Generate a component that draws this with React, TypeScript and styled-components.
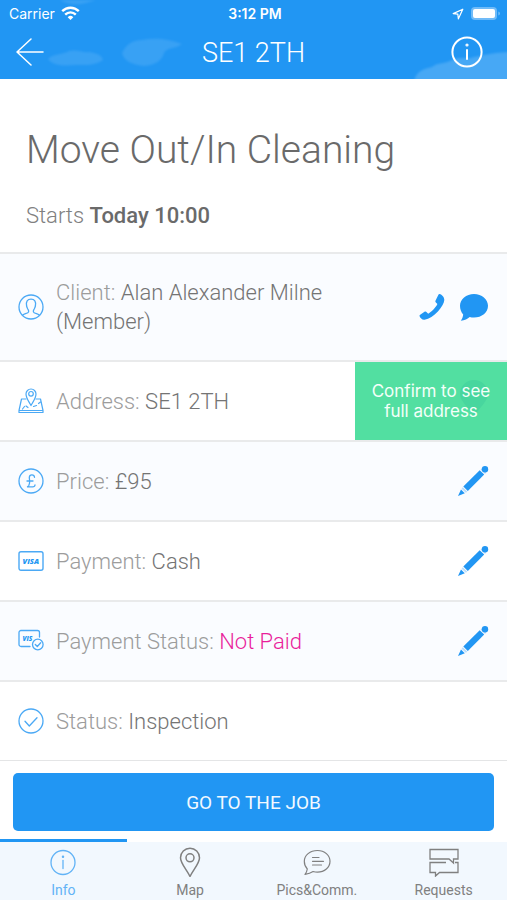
import React from 'react';
import styled, { createGlobalStyle, css } from 'styled-components';

const BLUE = '#2196f3';

const GlobalStyle = createGlobalStyle`
  * { box-sizing: border-box; }
  body {
    margin: 0;
    background: #ffffff;
    color: #616161;
    font-family: Roboto, "Liberation Sans", sans-serif;
    font-weight: 300;
  }
  button { font: inherit; border: 0; padding: 0; cursor: pointer; }
  svg { display: block; flex: none; }
`;

const Screen = styled.div`
  display: flex;
  flex-direction: column;
  min-height: 100vh;
`;

const Header = styled.header`
  position: sticky;
  top: 0;
  z-index: 2;
  overflow: hidden;
  background: ${BLUE};
  color: #ffffff;
`;

const Clouds = styled.svg`
  position: absolute;
  inset: 0;
  width: 100%;
  height: 100%;

  path { filter: blur(1px); }
`;

const StatusBar = styled.div`
  position: relative;
  display: grid;
  grid-template-columns: 1fr auto 1fr;
  align-items: center;
  height: 27px;
  padding: 0 6px 0 9px;
  font-family: Inter, sans-serif;
  font-size: 14px;
  font-weight: 400;
`;

const StatusGroup = styled.div<{ $end?: boolean }>`
  display: flex;
  align-items: center;
  gap: 6px;
  justify-content: ${(p) => (p.$end ? 'flex-end' : 'flex-start')};
`;

const Clock = styled.time`
  font-weight: 600;
`;

const NavBar = styled.div`
  position: relative;
  display: grid;
  grid-template-columns: 40px 1fr 32px;
  align-items: center;
  height: 52px;
  padding: 0 24px 2px 16px;
`;

const NavTitle = styled.h1`
  margin: 0;
  padding-top: 2px;
  text-align: center;
  font-size: 27px;
  line-height: 32px;
  font-weight: 300;
`;

const IconButton = styled.button`
  display: flex;
  align-items: center;
  background: none;
  color: inherit;
`;

const Intro = styled.section`
  padding: 47px 26px 23px;
`;

const JobTitle = styled.h2`
  margin: 0 0 28px;
  font-size: 39px;
  line-height: 48px;
  font-weight: 300;
  color: #6a6a6a;
`;

const Starts = styled.p`
  margin: 0;
  font-size: 22px;
  line-height: 27px;
  color: #808080;

  strong { font-weight: 500; color: #6a6a6a; }
`;

const Rows = styled.ul`
  margin: 0;
  padding: 0;
  list-style: none;
  border-bottom: 1px solid #e4e5e6;
`;

const Row = styled.li`
  display: flex;
  align-items: center;
  min-height: 80px;
  padding-left: 18px;
  border-top: 2px solid #e9eaeb;
  color: ${BLUE};

  &:nth-child(odd) { background: #fafcff; }

  > svg { color: #4ba9f5; }
`;

const RowText = styled.p`
  flex: 1;
  margin: 0;
  padding: 24px 12px;
  font-size: 22px;
  line-height: 29px;
`;

const Label = styled.span`
  color: #9c9c9c;
`;

const Value = styled.span<{ $alert?: boolean }>`
  color: ${(p) => (p.$alert ? '#e91e9b' : '#747474')};
`;

const Actions = styled.div`
  display: flex;
  gap: 13px;
  padding-right: 18px;
`;

const ConfirmButton = styled.button`
  position: relative;
  flex: 0 0 30%;
  align-self: stretch;
  min-width: 152px;
  background: #52dfa1;
  color: #f4fff9;
  font-family: Inter, sans-serif;
  font-size: 17px;
  line-height: 20px;
  font-weight: 400;
`;

const ConfirmText = styled.span`
  position: relative;
`;

const CoveredPin = styled.svg`
  position: absolute;
  right: 19px;
  top: 18px;
`;

const Footer = styled.footer`
  position: sticky;
  bottom: 0;
  margin-top: auto;
  background: #ffffff;
`;

const PrimaryButton = styled.button`
  display: block;
  width: calc(100% - 26px);
  height: 58px;
  margin: 12px 13px 8px;
  border-radius: 5px;
  background: ${BLUE};
  color: #f2f9ff;
  font-size: 19px;
  font-weight: 400;
`;

const Tabs = styled.nav`
  display: grid;
  grid-template-columns: repeat(4, 1fr);
`;

const Tab = styled.button<{ $active?: boolean }>`
  display: flex;
  flex-direction: column;
  align-items: center;
  gap: 3px;
  height: 61px;
  padding-top: 5px;
  border-top: 3px solid transparent;
  background: #f2f8fe;
  background-clip: padding-box;
  color: #808080;
  font-size: 14px;
  line-height: 20px;
  font-weight: 400;

  ${(p) =>
    p.$active &&
    css`
      border-top-color: ${BLUE};
      color: #62b3f6;
    `}
`;

const line = { fill: 'none', stroke: 'currentColor', strokeLinecap: 'round', strokeLinejoin: 'round' } as const;

const WifiIcon = () => (
  <svg width="19" height="15" viewBox="0 0 19 15" fill="none" stroke="#fff" strokeWidth="2.4">
    <path d="M1.2 5.2C6 .6 13 .6 17.8 5.2M4.2 8.6c3-3 7.6-3 10.6 0" />
    <path d="M9.5 14 6.7 11.2a4 4 0 0 1 5.6 0z" fill="#fff" stroke="none" />
  </svg>
);

const LocationIcon = () => (
  <svg width="12" height="12" viewBox="0 0 12 12" {...line} strokeWidth="1.2">
    <path d="M10.8 1.2 1.2 5.6l4.6.6.6 4.6z" />
  </svg>
);

const BatteryIcon = () => (
  <svg width="31" height="15" viewBox="0 0 31 15">
    <rect x="1" y="1" width="26" height="13" rx="4" fill="#70bbf8" />
    <rect x="3" y="3" width="22" height="9" rx="2" fill="#fff" />
    <path d="M28.5 5.5c1.7.6 1.7 3.4 0 4z" fill="#8ccaf9" />
  </svg>
);

const BackIcon = () => (
  <svg width="28" height="28" viewBox="0 0 28 28" {...line} strokeWidth="1.5">
    <path d="M27 14H1M15 1 1 14l14 13" />
  </svg>
);

const InfoIcon = () => (
  <svg width="32" height="32" viewBox="0 0 32 32" {...line} strokeWidth="2">
    <circle cx="16" cy="16" r="14.6" />
    <path d="M16 14v9" />
    <circle cx="16" cy="9" r=".6" fill="currentColor" />
  </svg>
);

const InfoTabIcon = () => (
  <svg width="30" height="30" viewBox="0 0 30 30" {...line} strokeWidth="1.3">
    <circle cx="15" cy="15.5" r="12" />
    <path d="M15 13.500v8" />
    <circle cx="15" cy="9.700" r=".6" fill="currentColor" />
  </svg>
);

const ClientIcon = () => (
  <svg width="26" height="26" viewBox="0 0 26 26" {...line} strokeWidth="1.3">
    <circle cx="13" cy="13" r="12" />
    <path d="M4.5 21.3c1-1.500 5.700-1.800 6.100-3.500.3-1.200-.2-1.800-.8-2.800-.5-.9-.9-1.700-1.200-3C7.700 7.400 9.500 5.200 13 5.200s5.300 2.200 4.400 6.800c-.3 1.300-.7 2.100-1.200 3-.6 1-1.100 1.600-.8 2.800.4 1.700 5.100 2 6.100 3.500" />
  </svg>
);

const AddressIcon = () => (
  <svg width="26" height="26" viewBox="0 0 26 26" {...line} strokeWidth="1.2">
    <path d="M8 11H3.500L1 22.500v2h24v-2L22.500 11H18M1 22.500h24" />
    <path d="M13 17.500C10.500 13 8 10 8 6a5 5 0 0 1 10 0c0 4-2.500 7-5 11.500z" />
    <circle cx="13" cy="5.800" r="2.300" />
    <path d="M4.500 21l2-2.500M8 18l2 1.500M15.500 18.500l3-1M20.500 15.500l2-1.500" />
  </svg>
);

const PriceIcon = () => (
  <svg width="26" height="26" viewBox="0 0 26 26" {...line} strokeWidth="1.3">
    <circle cx="13" cy="13" r="12" />
    <path d="M16.500 9.300c-.2-3-5-3.300-5.200.2 0 2.200 1.300 5-.6 8.300-.4.600-.9.800-1.200 1h5.200c1.300 0 2.200-.4 2.300-1.800M9 13h6" />
  </svg>
);

const VisaIcon = () => (
  <svg width="26" height="26" viewBox="0 0 26 26" {...line} strokeWidth="1.4">
    <rect x="1" y="3.700" width="24" height="18.600" rx="2" />
    <text x="12.800" y="15.800" textAnchor="middle" fontFamily="Open Sans, sans-serif" fontSize="7.500" fontWeight="800" fontStyle="italic" fill={BLUE} stroke="none">VISA</text>
  </svg>
);

const VisaCheckIcon = () => (
  <svg width="26" height="26" viewBox="0 0 26 26" {...line} strokeWidth="1.300">
    <path d="M12 18.500H3a2 2 0 0 1-2-2v-12a2 2 0 0 1 2-2h16.500a2 2 0 0 1 2 2V9" />
    <text x="4.500" y="12.500" fontFamily="Open Sans, sans-serif" fontSize="6.500" fontWeight="800" fontStyle="italic" fill={BLUE} stroke="none">VIS</text>
    <circle cx="19.800" cy="16.500" r="5.300" />
    <path d="m17.300 16.500 2 2 3.400-3.700" />
  </svg>
);

const StatusIcon = () => (
  <svg width="26" height="26" viewBox="0 0 26 26" {...line} strokeWidth="1.3">
    <circle cx="13" cy="13" r="12" />
    <path d="m7 13.300 4.300 4.700L19 9.700" />
  </svg>
);

const PhoneIcon = () => (
  <svg width="28" height="28" viewBox="0 0 28 28" fill="currentColor">
    <path d="M21.500 1c2.600.8 4.900 3 4.800 6-.2 3-2.500 7.200-6.400 11.400-4.200 4.400-8.600 7.500-13.400 8.300-2.300.3-4.300-1.800-4.900-3.500-.2-.7.1-1 .6-1.400l4.300-3c.8-.5 1.600-.3 2.200.4l1.500 1.500c2.800-1.300 7.600-6 9.200-9.600L17.900 9.500c-.6-.6-.7-1.200-.3-2L20.400 1.700c.3-.6.600-.8 1.100-.7z" />
  </svg>
);

const BubbleIcon = () => (
  <svg width="30" height="28" viewBox="0 0 30 28" fill="currentColor">
    <path d="M15 1c7.800 0 14 5.200 14 11.800s-6.200 11.800-14 11.800c-1.500 0-3-.2-4.300-.6-2 1.800-5 3.300-8.900 3.800 1.400-1.800 2.200-4.200 2.400-6.200C2.200 19.300 1 16.300 1 12.800 1 6.200 7.200 1 15 1z" />
  </svg>
);

const PencilIcon = () => (
  <svg width="32" height="32" viewBox="0 0 32 32" fill="currentColor">
    <path d="M1 31 4 24.600l3.800 3.700z" />
    <path d="m4.600 23.800 1.200-1.600 4.500 4.500-1.500 1.100z" opacity=".3" />
    <path d="M6.300 21.600 22.700 5.200l4.500 4.400-16.400 16.400z" />
    <path d="M23.500 4.400 25 3.200l4.200 4.200-1.200 1.500z" opacity=".3" />
    <circle cx="28" cy="4.300" r="3.200" />
  </svg>
);

const MapIcon = () => (
  <svg width="30" height="30" viewBox="0 0 30 30" {...line} strokeWidth="1.5">
    <path d="M15 29.500C12 23 5.500 16.500 5.500 10.700a9.500 9.500 0 0 1 19 0C24.500 16.500 18 23 15 29.500z" />
    <circle cx="15" cy="10.800" r="4" />
  </svg>
);

const CommentsIcon = () => (
  <svg width="30" height="30" viewBox="0 0 30 30" {...line} strokeWidth="1.2">
    <path d="M15.500 3.500C22.500 3.500 28 8.200 28 14.300s-5.500 10.900-12.500 10.900c-1.700 0-3-.2-4.400-.7-2 1.300-4.900 2.300-8.100 2.800 1.300-1.500 2-3.300 2.300-5.300C3.200 19.800 2.300 17.200 2.300 14.300 2.300 8.200 8 3.500 15.500 3.500z" />
    <path d="M10.500 10.500h6.500M10.500 14.300h11M10.500 18h9" />
  </svg>
);

const RequestsIcon = () => (
  <svg width="30" height="30" viewBox="0 0 30 30" fill="none" stroke="currentColor" strokeWidth="1.3">
    <path d="M1 2.500h28v9.500h-4.500v4l-4.500-4H1z" />
    <path d="M17 15.500H1v10h5.500v3.600l4-3.600H29v-10h-3" />
  </svg>
);

const EditButton = ({ label }: { label: string }) => (
  <Actions>
    <IconButton aria-label={label}><PencilIcon /></IconButton>
  </Actions>
);

const rows = [
  {
    label: 'Client', value: 'Alan Alexander Milne (Member)', icon: <ClientIcon />,
    action: (
      <Actions>
        <IconButton aria-label="Call client"><PhoneIcon /></IconButton>
        <IconButton aria-label="Message client"><BubbleIcon /></IconButton>
      </Actions>
    ),
  },
  {
    label: 'Address', value: 'SE1 2TH', icon: <AddressIcon />,
    action: (
      <ConfirmButton>
        <CoveredPin width="28" height="38" viewBox="0 0 28 38" fill="#48d69e">
          <path d="M14 38C11 29 0 22 0 14a14 14 0 0 1 28 0c0 8-11 15-14 24z" />
        </CoveredPin>
        <ConfirmText>Confirm to see<br />full address</ConfirmText>
      </ConfirmButton>
    ),
  },
  { label: 'Price', value: '£95', icon: <PriceIcon />, action: <EditButton label="Edit price" /> },
  { label: 'Payment', value: 'Cash', icon: <VisaIcon />, action: <EditButton label="Edit payment" /> },
  { label: 'Payment Status', value: 'Not Paid', alert: true, icon: <VisaCheckIcon />, action: <EditButton label="Edit payment status" /> },
  { label: 'Status', value: 'Inspection', icon: <StatusIcon /> },
];

const tabs = [
  { label: 'Info', icon: <InfoTabIcon /> },
  { label: 'Map', icon: <MapIcon /> },
  { label: 'Pics&Comm.', icon: <CommentsIcon /> },
  { label: 'Requests', icon: <RequestsIcon /> },
];

export default function App() {
  const [active, setActive] = React.useState('Info');

  return (
    <Screen>
      <GlobalStyle />
      <Header>
        <Clouds viewBox="0 0 507 79" preserveAspectRatio="none" fill="#fff">
          <path d="M48 59c6-6 15-4 21-8 8-2 14 2 20 1 7 1 13 3 14 8-8 6-20 5-28 5-10 1-22 1-27-6z" opacity=".1" />
          <path d="M122 53c4-8 10-13 20-13 12-2 24-2 40 4-6 5-15 3-18 9-2 8-9 12-20 13-10-1-20-4-22-13z" opacity=".1" />
          <path d="M60 0c8 5 18 5 26 3l10-3z" opacity=".1" />
          <path d="M414 81c3-11 10-12 18-14 6-5 14-3 20-7 8-4 16 0 22-3 9-1 14-4 35-5v29z" opacity=".17" />
        </Clouds>
        <StatusBar>
          <StatusGroup>Carrier<WifiIcon /></StatusGroup>
          <Clock>3:12 PM</Clock>
          <StatusGroup $end><LocationIcon /><BatteryIcon /></StatusGroup>
        </StatusBar>
        <NavBar>
          <IconButton aria-label="Back"><BackIcon /></IconButton>
          <NavTitle>SE1 2TH</NavTitle>
          <IconButton aria-label="Job information"><InfoIcon /></IconButton>
        </NavBar>
      </Header>
      <main>
        <Intro>
          <JobTitle>Move Out/In Cleaning</JobTitle>
          <Starts>Starts <strong>Today 10:00</strong></Starts>
        </Intro>
        <Rows>
          {rows.map((row) => (
            <Row key={row.label}>
              {row.icon}
              <RowText>
                <Label>{row.label}:</Label> <Value $alert={row.alert}>{row.value}</Value>
              </RowText>
              {row.action}
            </Row>
          ))}
        </Rows>
      </main>
      <Footer>
        <PrimaryButton>GO TO THE JOB</PrimaryButton>
        <Tabs>
          {tabs.map((tab) => (
            <Tab
              key={tab.label}
              $active={tab.label === active}
              aria-current={tab.label === active ? 'page' : undefined}
              onClick={() => setActive(tab.label)}
            >
              {tab.icon}
              {tab.label}
            </Tab>
          ))}
        </Tabs>
      </Footer>
    </Screen>
  );
}
